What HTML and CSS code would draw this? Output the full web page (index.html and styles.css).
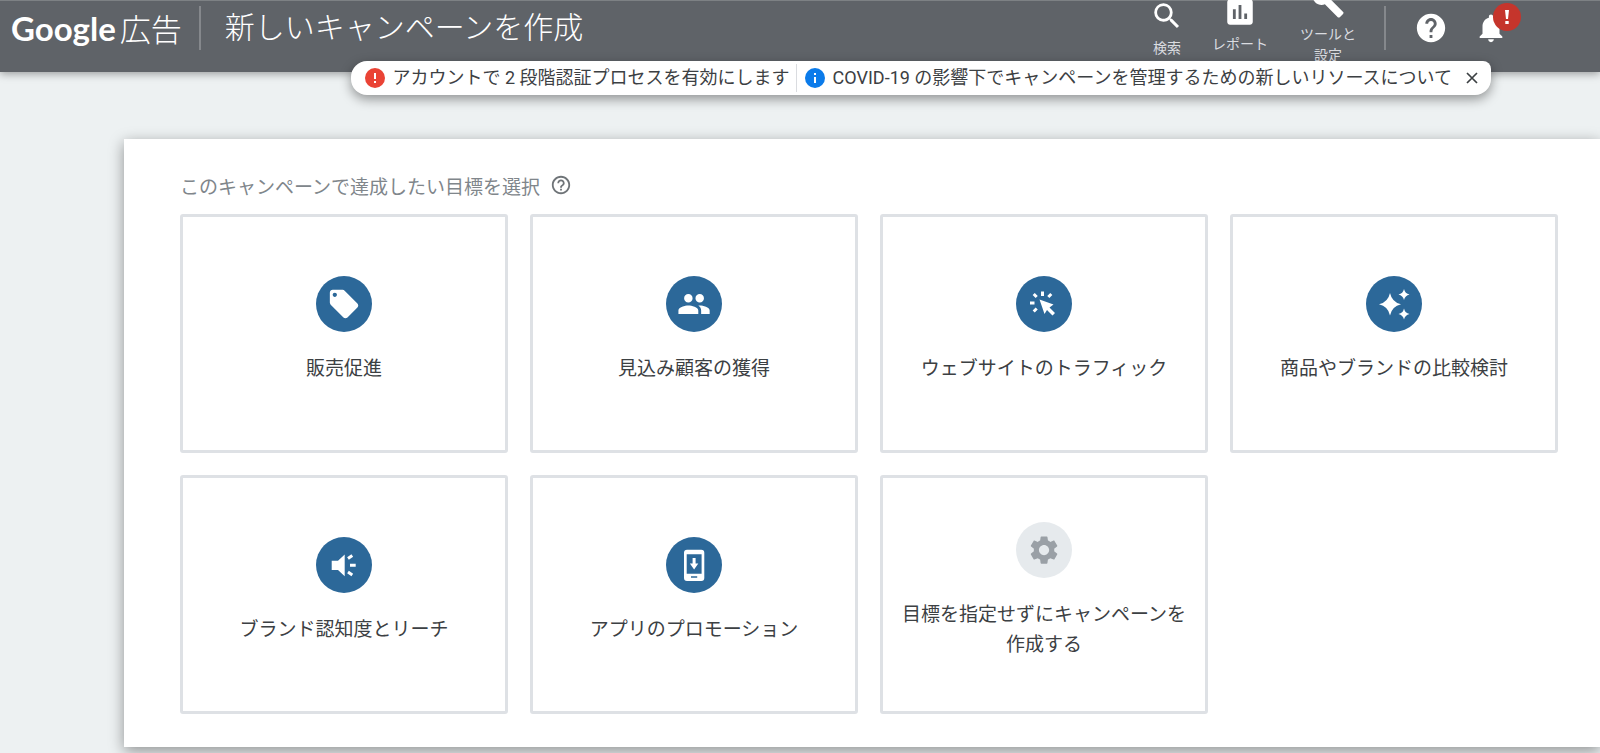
FILE: index.html
```html
<!DOCTYPE html>
<html lang="ja">
<head>
<meta charset="utf-8">
<title>新しいキャンペーンを作成 - Google 広告</title>
<link rel="stylesheet" href="styles.css">
</head>
<body>
<header class="topbar">
  <a class="brand" href="#"><span class="brand-google">Google</span><span class="brand-product">広告</span></a>
  <span class="divider"></span>
  <h1 class="page-title">新しいキャンペーンを作成</h1>
  <nav class="tools">
    <button class="tool tool-search" type="button">
      <svg class="icon" viewBox="0 0 24 24"><path d="M15.5 14h-.79l-.28-.27A6.47 6.47 0 0 0 16 9.5 6.5 6.5 0 1 0 9.5 16c1.61 0 3.09-.59 4.23-1.57l.27.28v.79l5 4.99L20.49 19l-4.99-5zm-6 0C7.01 14 5 11.99 5 9.5S7.01 5 9.5 5 14 7.01 14 9.5 11.99 14 9.5 14z"/></svg>
      <span>検索</span>
    </button>
    <button class="tool" type="button">
      <svg class="icon" viewBox="0 0 24 24"><path d="M19 3H5c-1.1 0-2 .9-2 2v14c0 1.100.9 2 2 2h14c1.100 0 2-.9 2-2V5c0-1.100-.9-2-2-2zM9 17H7v-7h2v7zm4 0h-2V7h2v10zm4 0h-2v-4h2v4z"/></svg>
      <span>レポート</span>
    </button>
    <button class="tool tool-settings" type="button">
      <svg class="icon" viewBox="0 0 24 24"><path d="M22.700 19l-9.100-9.100c.9-2.300.4-5-1.500-6.900-2-2-5-2.400-7.400-1.300L9 6 6 9 1.600 4.700C.4 7.100.9 10.100 2.900 12.100c1.900 1.900 4.600 2.400 6.900 1.500l9.100 9.100c.4.4 1 .4 1.400 0l2.300-2.300c.5-.4.5-1.100.1-1.400z"/></svg>
      <span>ツールと<br>設定</span>
    </button>
    <span class="divider"></span>
    <button class="tool" type="button" aria-label="ヘルプ">
      <svg class="icon" viewBox="0 0 24 24"><path d="M12 2C6.480 2 2 6.480 2 12s4.480 10 10 10 10-4.480 10-10S17.520 2 12 2zm1 17h-2v-2h2v2zm2.070-7.750l-.9.920C13.450 12.900 13 13.500 13 15h-2v-.5c0-1.100.45-2.100 1.170-2.830l1.240-1.260c.37-.36.59-.86.59-1.410 0-1.100-.9-2-2-2s-2 .9-2 2H8c0-2.210 1.790-4 4-4s4 1.790 4 4c0 .88-.36 1.680-.93 2.250z"/></svg>
    </button>
    <button class="tool tool-bell" type="button" aria-label="通知">
      <svg class="icon" viewBox="0 0 24 24"><path d="M12 22c1.100 0 2-.9 2-2h-4c0 1.100.89 2 2 2zm6-6v-5c0-3.070-1.640-5.640-4.500-6.320V4c0-.83-.67-1.500-1.500-1.500s-1.500.67-1.500 1.500v.68C7.630 5.360 6 7.920 6 11v5l-2 2v1h16v-1l-2-2z"/></svg>
      <svg class="badge" viewBox="0 0 28 28"><circle cx="14" cy="14" r="14" fill="#c5352c"/><path d="M12 7h4l-1 9h-2zM12.300 18h3.400v3h-3.400z" fill="#fff"/></svg>
    </button>
  </nav>
  <div class="notice">
    <a class="notice-item" href="#">
      <svg class="notice-icon" viewBox="0 0 20 20"><circle cx="10" cy="10" r="10" fill="#ea4335"/><path d="M9 5h2v6H9zM9 13h2v2H9z" fill="#fff"/></svg>
      <span>アカウントで 2 段階認証プロセスを有効にします</span>
    </a>
    <a class="notice-item notice-info" href="#">
      <svg class="notice-icon" viewBox="0 0 20 20"><circle cx="10" cy="10" r="10" fill="#0b7bea"/><path d="M9 5h2v2H9zM9 9h2v6H9z" fill="#fff"/></svg>
      <span>COVID-19 の影響下でキャンペーンを管理するための新しいリソースについて</span>
    </a>
    <button class="notice-close" type="button" aria-label="閉じる">
      <svg viewBox="0 0 12 12"><path d="M1 1l10 10M11 1L1 11" fill="none" stroke="#3c4043" stroke-width="1.700"/></svg>
    </button>
  </div>
</header>

<main class="panel">
  <div class="prompt">
    <h2 class="prompt-text">このキャンペーンで達成したい目標を選択</h2>
    <button class="prompt-help" type="button" aria-label="目標について">
      <svg viewBox="0 0 24 24"><path d="M11 18h2v-2h-2v2zm1-16C6.480 2 2 6.480 2 12s4.480 10 10 10 10-4.480 10-10S17.520 2 12 2zm0 18c-4.410 0-8-3.590-8-8s3.590-8 8-8 8 3.590 8 8-3.590 8-8 8zm0-14c-2.210 0-4 1.790-4 4h2c0-1.100.9-2 2-2s2 .9 2 2c0 2-3 1.750-3 5h2c0-2.250 3-2.500 3-5 0-2.210-1.790-4-4-4z"/></svg>
    </button>
  </div>
  <div class="goals">
    <button class="goal" type="button">
      <svg class="goal-icon" viewBox="0 0 56 56"><g transform="translate(11 11) scale(1.420)"><path d="M21.410 11.580l-9-9C12.050 2.220 11.550 2 11 2H4c-1.100 0-2 .9-2 2v7c0 .55.22 1.050.59 1.420l9 9c.36.36.86.58 1.410.58s1.050-.22 1.410-.59l7-7c.37-.36.59-.86.59-1.410s-.23-1.060-.59-1.420zM5.500 7C4.670 7 4 6.330 4 5.500S4.670 4 5.500 4 7 4.670 7 5.500 6.330 7 5.500 7z"/></g></svg>
      <span class="goal-label">販売促進</span>
    </button>
    <button class="goal" type="button">
      <svg class="goal-icon" viewBox="0 0 56 56"><g transform="translate(11 11) scale(1.420)"><path d="M16 11c1.660 0 2.990-1.340 2.990-3S17.660 5 16 5s-3 1.340-3 3 1.340 3 3 3zm-8 0c1.660 0 2.990-1.340 2.990-3S9.660 5 8 5 5 6.340 5 8s1.340 3 3 3zm0 2c-2.330 0-7 1.170-7 3.500V19h14v-2.500c0-2.330-4.670-3.500-7-3.500zm8 0c-.29 0-.62.020-.97.050 1.160.84 1.970 1.970 1.970 3.450V19h6v-2.500c0-2.330-4.670-3.500-7-3.500z"/></g></svg>
      <span class="goal-label">見込み顧客の獲得</span>
    </button>
    <button class="goal" type="button">
      <svg class="goal-icon" viewBox="0 0 56 56"><path d="M23.500 23.500L37.500 28.500 33.500 31.500 39 37 36.500 39.500 31 34 28.500 38z"/><path class="rays" d="M26.500 15.500v4.500M14 27h4.500M17.700 18l3 3M35.300 18l-3 3M17.700 35.500l3-3"/></svg>
      <span class="goal-label">ウェブサイトのトラフィック</span>
    </button>
    <button class="goal" type="button">
      <svg class="goal-icon" viewBox="0 0 56 56"><path d="M24 17Q26 26.300 35 28.300Q26 30.300 24 39.500Q22 30.300 13 28.300Q22 26.300 24 17zM38 13Q39 17.500 43.500 18.500Q39 19.500 38 24Q37 19.500 32.500 18.500Q37 17.500 38 13zM38 32.500Q39 37 43.500 38Q39 39 38 43.500Q37 39 32.500 38Q37 37 38 32.500z"/></svg>
      <span class="goal-label">商品やブランドの比較検討</span>
    </button>
    <button class="goal" type="button">
      <svg class="goal-icon" viewBox="0 0 56 56"><path d="M15.700 23.700H22L28.700 17.500V39.200L22 33H15.700z"/><path class="rays" d="M32 21.600l4.300-3M34 28.300h5.700M32 35l4.300 3"/></svg>
      <span class="goal-label">ブランド認知度とリーチ</span>
    </button>
    <button class="goal" type="button">
      <svg class="goal-icon" viewBox="0 0 56 56"><path fill-rule="evenodd" d="M21 12.700H35.300a3 3 0 0 1 3 3V41a3 3 0 0 1-3 3H21a3 3 0 0 1-3-3V15.700a3 3 0 0 1 3-3zM20.700 17.300V36.700H35.600V17.300zM25 39.300V40.700H31.200V39.300z"/><path d="M26.600 21h3v5.500h2.700L28.100 32.500 23.900 26.500h2.700z"/></svg>
      <span class="goal-label">アプリのプロモーション</span>
    </button>
    <button class="goal goal-none" type="button">
      <svg class="goal-icon" viewBox="0 0 56 56"><g transform="translate(11 11) scale(1.420)"><path d="M19.140 12.940c.04-.3.06-.61.06-.94 0-.32-.02-.64-.07-.94l2.030-1.580c.18-.14.23-.41.12-.61l-1.920-3.320c-.12-.22-.37-.29-.59-.22l-2.390.96c-.5-.38-1.030-.7-1.620-.94l-.36-2.540c-.04-.24-.24-.41-.48-.41h-3.840c-.24 0-.43.17-.47.41l-.36 2.540c-.59.24-1.130.57-1.620.94l-2.390-.96c-.22-.08-.47 0-.59.22L2.740 8.870c-.12.21-.08.47.12.61l2.030 1.580c-.05.3-.09.63-.09.94s.02.64.07.94l-2.030 1.580c-.18.14-.23.41-.12.61l1.920 3.320c.12.22.37.29.59.22l2.390-.96c.5.38 1.030.7 1.620.94l.36 2.540c.05.24.24.41.48.41h3.840c.24 0 .44-.17.47-.41l.36-2.540c.59-.24 1.130-.56 1.620-.94l2.390.96c.22.08.47 0 .59-.22l1.920-3.320c.12-.22.07-.47-.12-.61l-2.010-1.580zM12 15.600c-1.980 0-3.600-1.620-3.600-3.600s1.620-3.600 3.600-3.600 3.600 1.620 3.600 3.600-1.620 3.600-3.600 3.600z"/></g></svg>
      <span class="goal-label">目標を指定せずにキャンペーンを作成する</span>
    </button>
  </div>
</main>
</body>
</html>
```
FILE: styles.css
```css
* {
  box-sizing: border-box;
}

body {
  margin: 0;
  min-height: 100vh;
  background: #edf1f2;
  color: #3c4043;
  font-family: Roboto, "Noto Sans CJK JP", sans-serif;
  overflow: hidden;
}

button {
  padding: 0;
  border: 0;
  background: none;
  color: inherit;
  font: inherit;
  cursor: pointer;
}

a {
  color: inherit;
  text-decoration: none;
}

svg {
  display: block;
  flex: none;
}

/* Top bar */
.topbar {
  position: relative;
  display: flex;
  align-items: flex-start;
  height: 72px;
  padding: 0 92px 0 11px;
  border-top: 1px solid #7d8184;
  background: #5f6368;
  color: #fff;
  box-shadow: 0 2px 8px rgba(0, 0, 0, 0.35);
}

.brand {
  display: flex;
  align-items: baseline;
  gap: 4px;
  line-height: 54px;
}

.brand-google {
  font-family: Lato, sans-serif;
  font-size: 33px;
  font-weight: 700;
}

.brand-product {
  font-size: 31px;
  font-weight: 300;
}

.divider {
  width: 2px;
  height: 44px;
  margin-top: 5px;
  background: #85888c;
}

.brand + .divider {
  margin-left: 17px;
}

.page-title {
  margin: 0 0 0 24px;
  font-size: 30px;
  font-weight: 300;
  line-height: 54px;
  white-space: nowrap;
}

.tools {
  display: flex;
  gap: 26px;
  height: 54px;
  margin-left: auto;
}

.tool {
  display: flex;
  flex-direction: column;
  align-items: center;
  justify-content: center;
  gap: 5px;
  height: 54px;
  color: #dadce0;
  font-size: 14px;
  line-height: 21px;
}

.tool:has(span) {
  height: 48px;
}

.tool-search:has(span) {
  height: 56px;
  margin-right: 2px;
}

.tool-settings {
  width: 60px;
  margin-left: 4px;
}

.tools .divider {
  margin-right: 2px;
}

.tool-bell {
  position: relative;
}

.icon {
  width: 34px;
  height: 34px;
  fill: #fff;
}

.badge {
  position: absolute;
  top: 2px;
  right: -13px;
  width: 28px;
  height: 28px;
}

/* Notification strip laid over the bar's lower edge */
.notice {
  position: absolute;
  top: 60px;
  right: 109px;
  display: flex;
  align-items: center;
  height: 34px;
  padding: 0 13px 0 14px;
  border-radius: 16px 8px 16px 16px;
  background: #fff;
  color: #3c4043;
  font-size: 18px;
  line-height: 28px;
  white-space: nowrap;
  box-shadow: 0 4px 12px rgba(0, 0, 0, 0.4);
}

.notice-item {
  display: flex;
  align-items: center;
  gap: 8px;
}

.notice-info {
  margin-left: 6px;
  padding-left: 8px;
  border-left: 1px solid #dadce0;
}

.notice-icon {
  width: 20px;
  height: 20px;
}

.notice-close {
  margin-left: 14px;
}

.notice-close svg {
  width: 12px;
  height: 12px;
}

/* Goal picker */
.panel {
  margin: 67px 0 0 124px;
  padding: 35px 42px 33px 56px;
  background: #fff;
  box-shadow: 0 4px 14px rgba(0, 0, 0, 0.4);
}

.prompt {
  display: flex;
  align-items: flex-start;
  gap: 10px;
  margin-bottom: 12px;
}

.prompt-text {
  margin: 0;
  color: #80868b;
  font-size: 19px;
  font-weight: 400;
  line-height: 28px;
}

.prompt-help svg {
  width: 22px;
  height: 22px;
  fill: #6f7478;
}

.goals {
  display: grid;
  grid-template-columns: repeat(4, 1fr);
  gap: 22px;
}

.goal {
  display: flex;
  flex-direction: column;
  align-items: center;
  justify-content: center;
  gap: 22px;
  min-height: 239px;
  padding: 0 12px 8px;
  border: 3px solid #dee1e5;
  border-radius: 3px;
}

.goal-icon {
  width: 56px;
  height: 56px;
  border-radius: 50%;
  background: #2c6899;
  fill: #fff;
}

.goal-none .goal-icon {
  background: #e6eaed;
  fill: #9aa0a6;
}

.rays {
  fill: none;
  stroke: #fff;
  stroke-width: 3;
}

.goal-label {
  font-size: 19px;
  line-height: 30px;
}
```
